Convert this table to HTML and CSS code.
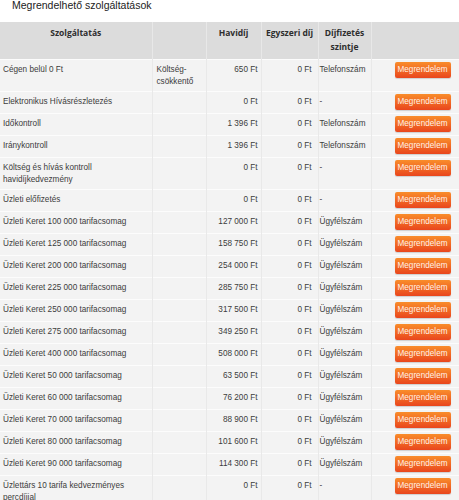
FILE: index.html
```html
<!DOCTYPE html>
<html lang="hu">
<head>
<meta charset="utf-8">
<title>Megrendelhető szolgáltatások</title>
<link rel="stylesheet" href="styles.css">
</head>
<body>
<h1 class="title">Megrendelhető szolgáltatások</h1>
<table class="services">
  <colgroup>
    <col class="c-name"><col class="c-cat"><col class="c-monthly"><col class="c-once"><col class="c-level"><col class="c-action">
  </colgroup>
  <thead>
    <tr>
      <th>Szolgáltatás</th>
      <th></th>
      <th>Havidíj</th>
      <th>Egyszeri díj</th>
      <th>Díjfizetés szintje</th>
      <th></th>
    </tr>
  </thead>
  <tbody>
    <tr><td class="name">Cégen belül 0 Ft</td><td class="cat">Költség-csökkentő</td><td class="num">650&nbsp;Ft</td><td class="once">0&nbsp;Ft</td><td class="level">Telefonszám</td><td class="action"><button class="order">Megrendelem</button></td></tr>
    <tr><td class="name">Elektronikus Hívásrészletezés</td><td class="cat"></td><td class="num">0&nbsp;Ft</td><td class="once">0&nbsp;Ft</td><td class="level">-</td><td class="action"><button class="order">Megrendelem</button></td></tr>
    <tr><td class="name">Időkontroll</td><td class="cat"></td><td class="num">1&nbsp;396&nbsp;Ft</td><td class="once">0&nbsp;Ft</td><td class="level">Telefonszám</td><td class="action"><button class="order">Megrendelem</button></td></tr>
    <tr><td class="name">Iránykontroll</td><td class="cat"></td><td class="num">1&nbsp;396&nbsp;Ft</td><td class="once">0&nbsp;Ft</td><td class="level">Telefonszám</td><td class="action"><button class="order">Megrendelem</button></td></tr>
    <tr><td class="name">Költség és hívás kontroll havidíjkedvezmény</td><td class="cat"></td><td class="num">0&nbsp;Ft</td><td class="once">0&nbsp;Ft</td><td class="level">-</td><td class="action"><button class="order">Megrendelem</button></td></tr>
    <tr><td class="name">Üzleti előfizetés</td><td class="cat"></td><td class="num">0&nbsp;Ft</td><td class="once">0&nbsp;Ft</td><td class="level">-</td><td class="action"><button class="order">Megrendelem</button></td></tr>
    <tr><td class="name">Üzleti Keret 100 000 tarifacsomag</td><td class="cat"></td><td class="num">127&nbsp;000&nbsp;Ft</td><td class="once">0&nbsp;Ft</td><td class="level">Ügyfélszám</td><td class="action"><button class="order">Megrendelem</button></td></tr>
    <tr><td class="name">Üzleti Keret 125 000 tarifacsomag</td><td class="cat"></td><td class="num">158&nbsp;750&nbsp;Ft</td><td class="once">0&nbsp;Ft</td><td class="level">Ügyfélszám</td><td class="action"><button class="order">Megrendelem</button></td></tr>
    <tr><td class="name">Üzleti Keret 200 000 tarifacsomag</td><td class="cat"></td><td class="num">254&nbsp;000&nbsp;Ft</td><td class="once">0&nbsp;Ft</td><td class="level">Ügyfélszám</td><td class="action"><button class="order">Megrendelem</button></td></tr>
    <tr><td class="name">Üzleti Keret 225 000 tarifacsomag</td><td class="cat"></td><td class="num">285&nbsp;750&nbsp;Ft</td><td class="once">0&nbsp;Ft</td><td class="level">Ügyfélszám</td><td class="action"><button class="order">Megrendelem</button></td></tr>
    <tr><td class="name">Üzleti Keret 250 000 tarifacsomag</td><td class="cat"></td><td class="num">317&nbsp;500&nbsp;Ft</td><td class="once">0&nbsp;Ft</td><td class="level">Ügyfélszám</td><td class="action"><button class="order">Megrendelem</button></td></tr>
    <tr><td class="name">Üzleti Keret 275 000 tarifacsomag</td><td class="cat"></td><td class="num">349&nbsp;250&nbsp;Ft</td><td class="once">0&nbsp;Ft</td><td class="level">Ügyfélszám</td><td class="action"><button class="order">Megrendelem</button></td></tr>
    <tr><td class="name">Üzleti Keret 400 000 tarifacsomag</td><td class="cat"></td><td class="num">508&nbsp;000&nbsp;Ft</td><td class="once">0&nbsp;Ft</td><td class="level">Ügyfélszám</td><td class="action"><button class="order">Megrendelem</button></td></tr>
    <tr><td class="name">Üzleti Keret 50 000 tarifacsomag</td><td class="cat"></td><td class="num">63&nbsp;500&nbsp;Ft</td><td class="once">0&nbsp;Ft</td><td class="level">Ügyfélszám</td><td class="action"><button class="order">Megrendelem</button></td></tr>
    <tr><td class="name">Üzleti Keret 60 000 tarifacsomag</td><td class="cat"></td><td class="num">76&nbsp;200&nbsp;Ft</td><td class="once">0&nbsp;Ft</td><td class="level">Ügyfélszám</td><td class="action"><button class="order">Megrendelem</button></td></tr>
    <tr><td class="name">Üzleti Keret 70 000 tarifacsomag</td><td class="cat"></td><td class="num">88&nbsp;900&nbsp;Ft</td><td class="once">0&nbsp;Ft</td><td class="level">Ügyfélszám</td><td class="action"><button class="order">Megrendelem</button></td></tr>
    <tr><td class="name">Üzleti Keret 80 000 tarifacsomag</td><td class="cat"></td><td class="num">101&nbsp;600&nbsp;Ft</td><td class="once">0&nbsp;Ft</td><td class="level">Ügyfélszám</td><td class="action"><button class="order">Megrendelem</button></td></tr>
    <tr><td class="name">Üzleti Keret 90 000 tarifacsomag</td><td class="cat"></td><td class="num">114&nbsp;300&nbsp;Ft</td><td class="once">0&nbsp;Ft</td><td class="level">Ügyfélszám</td><td class="action"><button class="order">Megrendelem</button></td></tr>
    <tr><td class="name">Üzlettárs 10 tarifa kedvezményes percdíjjal</td><td class="cat"></td><td class="num">0&nbsp;Ft</td><td class="once">0&nbsp;Ft</td><td class="level">-</td><td class="action"><button class="order">Megrendelem</button></td></tr>
  </tbody>
</table>
</body>
</html>
```

FILE: styles.css
```css
html, body {
  margin: 0;
  padding: 0;
  background: #ffffff;
}

body {
  font-family: "Liberation Sans", Arial, sans-serif;
  color: #3a3a3a;
  width: 459px;
  overflow: hidden;
}

.title {
  margin: 0 0 11px 12px;
  font-size: 10.5px;
  line-height: 11px;
  font-weight: normal;
  color: #222;
}

.services {
  width: 459px;
  table-layout: fixed;
  border-collapse: collapse;
  border-spacing: 0;
}

.c-name { width: 152px; }
.c-cat { width: 54px; }
.c-monthly { width: 55px; }
.c-once { width: 57px; }
.c-level { width: 53px; }
.c-action { width: 88px; }

.services th {
  background: #dcdcdc;
  font-family: "Open Sans", "DejaVu Sans", sans-serif;
  font-weight: bold;
  font-size: 8.5px;
  line-height: 14px;
  color: #2e2e2e;
  text-align: center;
  vertical-align: top;
  padding: 4px 2px 5px;
  height: 28px;
  border-left: 1px solid #e8e8e8;
}

.services th:first-child {
  border-left: none;
}

.services td {
  background: #f3f3f3;
  font-size: 8.2px;
  line-height: 12px;
  vertical-align: top;
  padding: 4px 3px 3px;
  border-top: 1px solid #fcfcfc;
  border-left: 1px solid #e9e9e9;
  color: #3c3c3c;
}

.services td:first-child {
  border-left: none;
}

.services td.cat {
  padding-left: 4px;
}

.services td.num {
  text-align: right;
  padding-right: 3px;
}

.services td.once {
  text-align: right;
  padding-right: 6px;
}

.services td.level {
  padding-left: 1px;
  padding-right: 0;
}

.services td.action {
  padding: 2px 9px 3px 23px;
}

.order {
  display: block;
  width: 56px;
  height: 16px;
  padding: 0;
  margin: 0;
  border: none;
  border-radius: 2px;
  background: linear-gradient(#f98d2b, #e9461d);
  color: #fff1e6;
  font-family: "Liberation Sans", Arial, sans-serif;
  font-size: 8.2px;
  line-height: 16px;
  text-align: center;
  box-shadow: 0 1px 1px rgba(0, 0, 0, 0.15);
}
```
